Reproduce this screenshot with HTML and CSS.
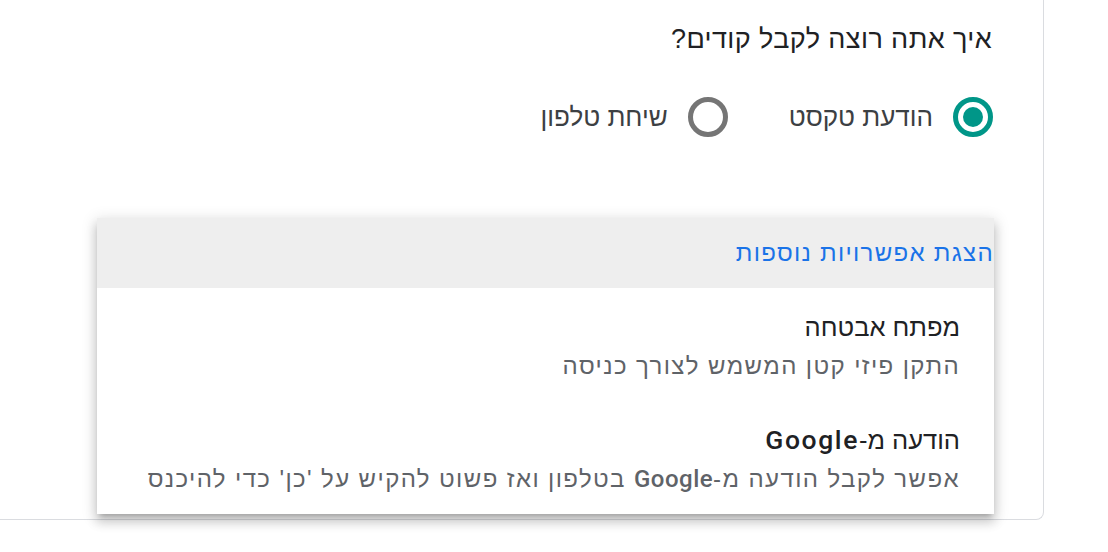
FILE: index.html
```html
<!DOCTYPE html>
<html lang="he" dir="rtl">
<head>
<meta charset="utf-8">
<title>קבלת קודים</title>
<link rel="stylesheet" href="styles.css">
</head>
<body>
<div class="card">
  <div class="question">איך אתה רוצה לקבל קודים?</div>
  <div class="radios">
    <label class="option">
      <span class="radio checked"></span>
      <span class="option-text">הודעת טקסט</span>
    </label>
    <label class="option">
      <span class="radio"></span>
      <span class="option-text">שיחת טלפון</span>
    </label>
  </div>

  <div class="menu">
    <div class="menu-header">הצגת אפשרויות נוספות</div>
    <div class="menu-item">
      <div class="item-title">מפתח אבטחה</div>
      <div class="item-desc">התקן פיזי קטן המשמש לצורך כניסה</div>
    </div>
    <div class="menu-item">
      <div class="item-title">הודעה מ-<span class="latin">Google</span></div>
      <div class="item-desc">אפשר לקבל הודעה מ-<b class="brand">Google</b> בטלפון ואז פשוט להקיש על 'כן' כדי להיכנס</div>
    </div>
  </div>
</div>
</body>
</html>
```

FILE: styles.css
```css
html, body {
  margin: 0;
  padding: 0;
  background: #ffffff;
}

body {
  direction: rtl;
  font-family: "Liberation Sans", Arial, sans-serif;
  width: 1108px;
  height: 552px;
  overflow: hidden;
}

.card {
  position: relative;
  box-sizing: border-box;
  width: 1044px;
  height: 520px;
  margin-left: 0;
  margin-right: auto;
  border-right: 1px solid #dadce0;
  border-bottom: 1px solid #dadce0;
  border-bottom-right-radius: 8px;
  padding: 23px 51px 0 0;
}

.question {
  font-size: 27px;
  line-height: 32px;
  letter-spacing: 0.4px;
  color: #202124;
}

.radios {
  display: flex;
  align-items: center;
  gap: 61px;
  margin-top: 42px;
  margin-right: -1px;
}

.option {
  display: flex;
  align-items: center;
  gap: 20px;
}

.radio {
  box-sizing: border-box;
  width: 40px;
  height: 40px;
  border: 5px solid #757575;
  border-radius: 50%;
  display: flex;
  align-items: center;
  justify-content: center;
}

.radio.checked {
  border-color: #009688;
}

.radio.checked::after {
  content: "";
  width: 20px;
  height: 20px;
  border-radius: 50%;
  background: #009688;
}

.option-text {
  font-size: 26px;
  line-height: 32px;
  color: #3c4043;
}

.menu {
  position: absolute;
  left: 97px;
  top: 218px;
  width: 897px;
  background: #ffffff;
  font-family: "Liberation Sans", Arial, sans-serif;
  box-shadow: 0 5px 5px -3px rgba(0, 0, 0, 0.2),
              0 8px 10px 1px rgba(0, 0, 0, 0.14),
              0 3px 14px 2px rgba(0, 0, 0, 0.12);
}

.menu-header {
  height: 70px;
  display: flex;
  align-items: center;
  padding-right: 0;
  background: #eeeeee;
  color: #1a73e8;
  font-size: 24px;
  letter-spacing: 1.3px;
}

.menu-item {
  padding: 23px 34px 21px 34px;
}

.item-title {
  font-size: 25.5px;
  line-height: 32px;
  color: #202124;
}

.item-desc {
  margin-top: 9px;
  font-size: 24px;
  line-height: 28px;
  letter-spacing: 1.4px;
  color: #5f6368;
}

.latin,
.brand {
  font-family: Roboto, "Liberation Sans", sans-serif;
  font-weight: 500;
}

.latin {
  font-size: 26.5px;
  letter-spacing: 1.6px;
}

.brand {
  letter-spacing: 0.5px;
}
```
